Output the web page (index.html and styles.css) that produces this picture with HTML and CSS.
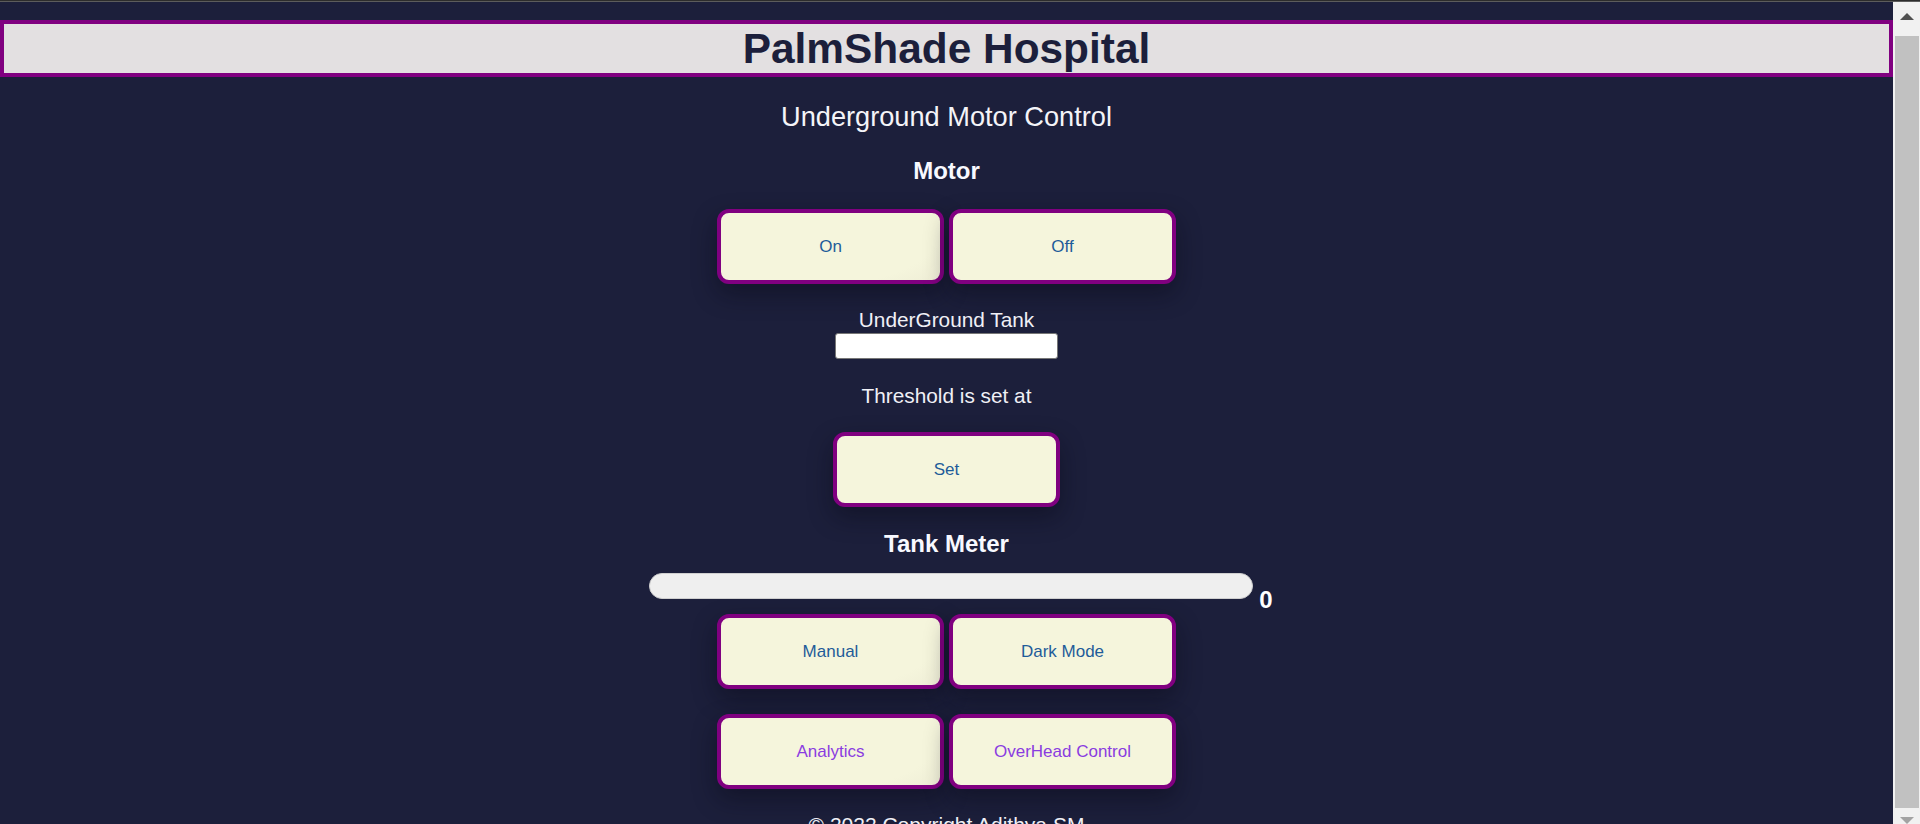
FILE: index.html
```html
<!DOCTYPE html>
<html lang="en">
<head>
<meta charset="utf-8">
<title>PalmShade Hospital</title>
<link rel="stylesheet" href="styles.css">
</head>
<body>
<div class="topline"></div>
<div class="frame">
  <div class="page">
    <header class="site-header">
      <h1 class="brand">PalmShade Hospital</h1>
    </header>
    <main class="panel">
      <p class="subtitle">Underground Motor Control</p>
      <h2 class="section-title">Motor</h2>
      <div class="btn-row btn-row-first">
        <button class="btn btn-shade" type="button">On</button>
        <button class="btn" type="button">Off</button>
      </div>
      <label class="field-label" for="ugtank">UnderGround Tank</label>
      <input id="ugtank" class="field-input" type="text">
      <p class="threshold">Threshold is set at</p>
      <button class="btn btn-set" type="button">Set</button>
      <h2 class="section-title meter-title">Tank Meter</h2>
      <div class="meter-row">
        <div class="meter"></div>
        <span class="meter-value">0</span>
      </div>
      <div class="btn-row">
        <button class="btn btn-shade" type="button">Manual</button>
        <button class="btn" type="button">Dark Mode</button>
      </div>
      <div class="btn-row btn-row-links">
        <a class="btn btn-link btn-shade" href="#">Analytics</a>
        <a class="btn btn-link" href="#">OverHead Control</a>
      </div>
      <footer class="copyright">© 2022 Copyright Adithya SM</footer>
    </main>
  </div>
  <div class="scrollbar" aria-hidden="true">
    <div class="sb-button sb-up"><span class="sb-arrow-up"></span></div>
    <div class="sb-thumb"></div>
    <div class="sb-button sb-down"><span class="sb-arrow-down"></span></div>
  </div>
</div>
</body>
</html>
```
FILE: styles.css
```css
html,
body {
  height: 100%;
}

html {
  background: #1c1f3b;
  overflow: hidden;
}

body {
  margin: 0;
  display: flex;
  flex-direction: column;
  background: #1c1f3b;
  font-family: "Liberation Sans", Arial, sans-serif;
  color: #f2f2f7;
}

.topline {
  flex: 0 0 2px;
  background: linear-gradient(#2c2c2c 50%, #5c5c5c 50%);
}

.frame {
  flex: 1;
  display: flex;
  min-height: 0;
}

.page {
  flex: 1;
  min-width: 0;
  overflow: hidden;
}

/* scrollbar column */
.scrollbar {
  flex: 0 0 27px;
  display: flex;
  flex-direction: column;
  background: #f1f1f1;
}

.sb-button {
  display: flex;
  justify-content: center;
}

.sb-up {
  height: 34px;
  padding-left: 1px;
  box-sizing: border-box;
}

.sb-arrow-up {
  margin-top: 11px;
  width: 0;
  height: 0;
  border-left: 7px solid transparent;
  border-right: 7px solid transparent;
  border-bottom: 7px solid #505050;
}

.sb-thumb {
  flex: 1;
  margin: 0 1px 0 2px;
  background: #c1c1c1;
}

.sb-down {
  height: 16px;
  padding-left: 1px;
  box-sizing: border-box;
}

.sb-arrow-down {
  margin-top: 9px;
  width: 0;
  height: 0;
  border-left: 7px solid transparent;
  border-right: 7px solid transparent;
  border-top: 7px solid #a3a3a3;
}

/* header */
.site-header {
  margin-top: 18px;
  border: 4px solid #800080;
  background: #e3e0e1;
}

.brand {
  margin: 0;
  height: 49px;
  line-height: 49px;
  font-size: 42.4px;
  font-weight: 700;
  text-align: center;
  color: #1c1f3b;
}

/* panel */
.panel {
  display: flex;
  flex-direction: column;
  align-items: center;
  padding-bottom: 16px;
}

.subtitle {
  margin: 24px 0 0;
  font-size: 27.2px;
  line-height: 31px;
  color: #f4f4f8;
}

.section-title {
  margin: 25px 0 0;
  font-size: 24px;
  line-height: 28px;
  font-weight: 700;
  color: #f8f9ff;
}

.meter-title {
  margin-top: 23px;
}

.btn-row {
  display: flex;
  gap: 5px;
}

.btn-row-first {
  margin-top: 24px;
}

.btn-row-links {
  margin-top: 25px;
}

.btn {
  box-sizing: border-box;
  width: 227px;
  height: 75px;
  border: 4px solid #800080;
  border-radius: 12px;
  background: #f5f5dc;
  color: #1f5c99;
  font-family: "Liberation Sans", Arial, sans-serif;
  font-size: 17px;
  box-shadow: 0 10px 24px rgba(8, 9, 22, 0.45);
  cursor: pointer;
}

.btn-shade {
  background: radial-gradient(ellipse 120% 140% at 25% 30%, #f5f5dc 62%, #e8e6d0 100%);
}

.btn-link {
  display: flex;
  align-items: center;
  justify-content: center;
  text-decoration: none;
  color: #8a3ce0;
}

.field-label {
  display: block;
  margin-top: 24px;
  font-size: 20.8px;
  line-height: 24px;
  color: #f0f0f6;
}

.field-input {
  box-sizing: border-box;
  margin-top: 1px;
  width: 223px;
  height: 26px;
  border: 1px solid #767676;
  border-radius: 3px;
  background: #ffffff;
  padding: 0 4px;
}

.threshold {
  margin: 25px 0 0;
  font-size: 20.8px;
  line-height: 24px;
  color: #f0f0f6;
}

.btn-set {
  margin-top: 24px;
}

.meter-row {
  align-self: stretch;
  display: flex;
  justify-content: center;
  align-items: flex-start;
  gap: 6px;
  padding-left: 29px;
  margin-top: 15px;
}

.meter {
  box-sizing: border-box;
  width: 604px;
  height: 26px;
  border-radius: 13px;
  background: #efefef;
  border: 1px solid #cfcfcf;
}

.meter-value {
  margin-top: 13px;
  font-size: 24px;
  line-height: 28px;
  font-weight: 700;
  color: #ffffff;
}

.copyright {
  margin-top: 24px;
  font-size: 21px;
  line-height: 24px;
  color: #f0f0f6;
}
```
